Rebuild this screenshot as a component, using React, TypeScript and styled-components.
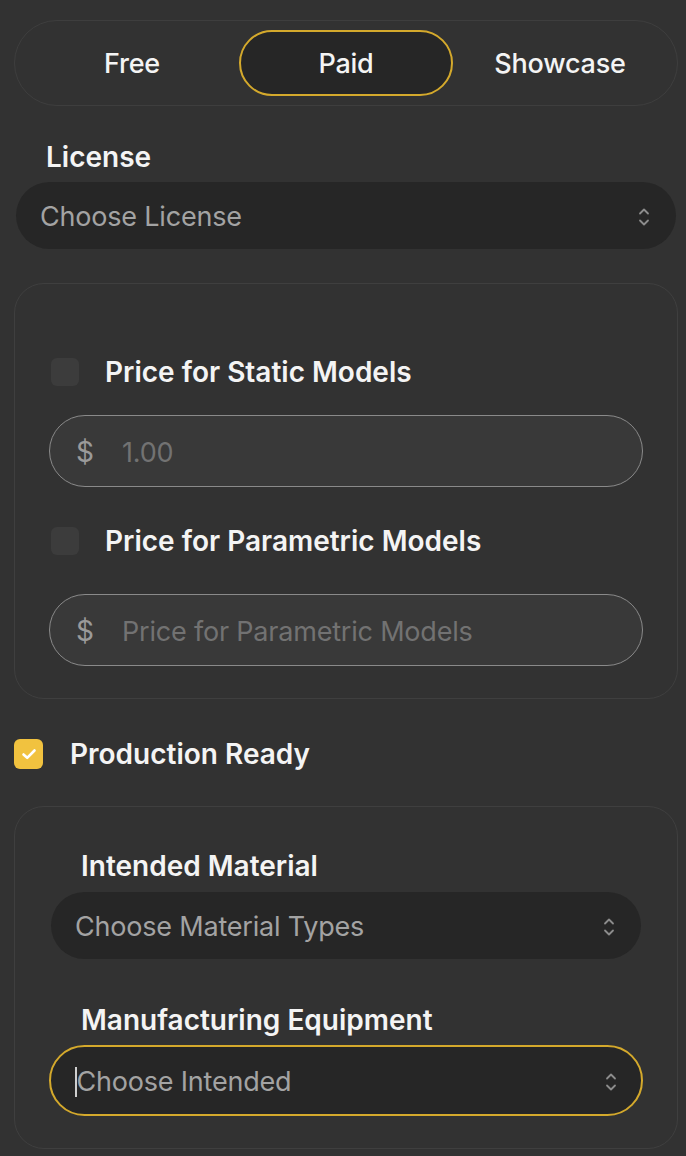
import styled, { createGlobalStyle } from "styled-components";

const GlobalStyle = createGlobalStyle`
  html, body {
    margin: 0;
    padding: 0;
    background-color: #323232;
  }
  body {
    font-family: Inter, "Noto Sans", "Liberation Sans", sans-serif;
    color: #f2f2f2;
    -webkit-font-smoothing: antialiased;
  }
  * {
    box-sizing: border-box;
  }
`;

const Page = styled.div`
  width: 686px;
  min-height: 1156px;
  padding: 20px 8px 0 14px;
  display: flex;
  flex-direction: column;
`;

const Segmented = styled.div`
  height: 86px;
  padding: 9px 10px;
  border: 1px solid #3e3e3e;
  border-radius: 43px;
  display: grid;
  grid-template-columns: repeat(3, 1fr);
`;

const Segment = styled.div<{ active?: boolean }>`
  display: flex;
  align-items: center;
  justify-content: center;
  padding-top: 1px;
  border-radius: 34px;
  font-size: 27px;
  font-weight: 500;
  letter-spacing: -0.2px;
  color: #f4f4f4;
  border: 2px solid ${(props) => (props.active ? "#d4a92c" : "transparent")};
  background-color: ${(props) => (props.active ? "#262626" : "transparent")};
`;

const Label = styled.div<{ indent: number; top: number }>`
  height: 30px;
  line-height: 30px;
  margin-top: ${(props) => props.top}px;
  padding-left: ${(props) => props.indent}px;
  font-size: 28px;
  font-weight: 600;
  color: #f4f4f4;
`;

const Select = styled.div<{ focused?: boolean; top: number; inset: number }>`
  height: ${(props) => (props.focused ? 71 : 67)}px;
  margin: ${(props) => props.top}px ${(props) => props.inset}px 0;
  padding: 2px ${(props) => (props.focused ? 24 : 26)}px 0 24px;
  display: flex;
  align-items: center;
  justify-content: space-between;
  border-radius: 36px;
  background-color: #262626;
  border: ${(props) => (props.focused ? "2px solid #d4a92c" : "none")};
  font-size: 27px;
  letter-spacing: -0.2px;
  color: #a3a3a3;
`;

const SelectText = styled.span`
  display: flex;
  align-items: center;
`;

const Caret = styled.span`
  width: 1.5px;
  height: 30px;
  background-color: #cfcfcf;
`;

const Panel = styled.div<{ top: number; pad: string }>`
  margin-top: ${(props) => props.top}px;
  padding: ${(props) => props.pad};
  border: 1px solid #3f3f3f;
  border-radius: 30px;
  display: flex;
  flex-direction: column;
`;

const CheckRow = styled.div<{ top: number; indent: number; gap: number }>`
  height: 30px;
  margin-top: ${(props) => props.top}px;
  padding-left: ${(props) => props.indent}px;
  display: flex;
  align-items: center;
  gap: ${(props) => props.gap}px;
  font-size: 28px;
  font-weight: 600;
  color: #f4f4f4;
`;

const Box = styled.span<{ checked?: boolean }>`
  width: ${(props) => (props.checked ? 29 : 28)}px;
  height: ${(props) => (props.checked ? 30 : 28)}px;
  flex-shrink: 0;
  border-radius: 6px;
  background-color: ${(props) => (props.checked ? "#f1c23f" : "#3c3c3c")};
  display: flex;
  align-items: center;
  justify-content: center;
`;

const PriceInput = styled.div<{ top: number }>`
  height: 72px;
  margin-top: ${(props) => props.top}px;
  padding: 2px 0 0 26px;
  display: flex;
  align-items: center;
  border: 1.5px solid #8a8a8a;
  border-radius: 36px;
  background-color: #393939;
  font-size: 27px;
  letter-spacing: -0.2px;
`;

const Dollar = styled.span`
  width: 46px;
  color: #9a9a9a;
  font-size: 28px;
`;

const Placeholder = styled.span`
  color: #727272;
`;

function Chevrons() {
  return (
    <svg width="12" height="24" viewBox="0 0 12 24" fill="none">
      <path d="M2 8.5 L6 4.5 L10 8.5" stroke="#8c8c8c" strokeWidth="1.8" strokeLinecap="round" strokeLinejoin="round" />
      <path d="M2 15.5 L6 19.5 L10 15.5" stroke="#8c8c8c" strokeWidth="1.8" strokeLinecap="round" strokeLinejoin="round" />
    </svg>
  );
}

function Check() {
  return (
    <svg width="20" height="20" viewBox="0 0 20 20" fill="none">
      <path d="M4.5 10.5 L8.2 13.8 L15.5 6.5" stroke="#ffffff" strokeWidth="2.6" strokeLinecap="round" strokeLinejoin="round" />
    </svg>
  );
}

function App() {
  return (
    <>
      <GlobalStyle />
      <Page>
        <Segmented>
          <Segment>Free</Segment>
          <Segment active>Paid</Segment>
          <Segment>Showcase</Segment>
        </Segmented>

        <Label top={36} indent={32}>License</Label>
        <Select top={10} inset={2}>
          <SelectText>Choose License</SelectText>
          <Chevrons />
        </Select>

        <Panel top={34} pad="73px 34px 32px 34px">
          <CheckRow top={0} indent={2} gap={26}>
            <Box />
            Price for Static Models
          </CheckRow>
          <PriceInput top={28}>
            <Dollar>$</Dollar>
            <Placeholder>1.00</Placeholder>
          </PriceInput>
          <CheckRow top={39} indent={2} gap={26}>
            <Box />
            Price for Parametric Models
          </CheckRow>
          <PriceInput top={38}>
            <Dollar>$</Dollar>
            <Placeholder>Price for Parametric Models</Placeholder>
          </PriceInput>
        </Panel>

        <CheckRow top={40} indent={0} gap={27}>
          <Box checked>
            <Check />
          </Box>
          Production Ready
        </CheckRow>

        <Panel top={37} pad="44px 34px 32px 34px">
          <Label top={0} indent={32}>Intended Material</Label>
          <Select top={11} inset={2}>
            <SelectText>Choose Material Types</SelectText>
            <Chevrons />
          </Select>
          <Label top={46} indent={32}>Manufacturing Equipment</Label>
          <Select top={10} inset={0} focused>
            <SelectText>
              <Caret />
              Choose Intended
            </SelectText>
            <Chevrons />
          </Select>
        </Panel>
      </Page>
    </>
  );
}

export default App;
